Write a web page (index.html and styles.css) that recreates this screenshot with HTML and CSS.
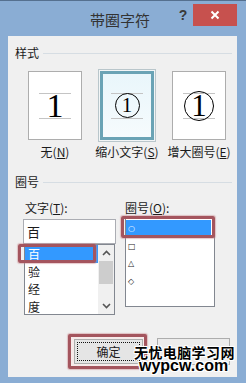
FILE: index.html
```html
<!DOCTYPE html>
<html lang="zh-CN">
<head>
    <meta charset="UTF-8">
    <title>带圈字符</title>
    <link rel="stylesheet" href="styles.css">
</head>
<body>
    <div class="window">
        <div class="titlebar">
            <span class="title">带圈字符</span>
            <span class="help">?</span>
            <span class="close">
                <svg width="10" height="10" viewBox="0 0 10 10"><path d="M1.5 1.5 L8.5 8.5 M8.5 1.5 L1.5 8.5" stroke="#fff" stroke-width="2"/></svg>
            </span>
        </div>
        <div class="panel">
            <div class="legend"><span>样式</span><i></i></div>
            <div class="styles">
                <div class="style-opt">
                    <div class="preview">
                        <div class="guide"><span class="digit">1</span></div>
                    </div>
                    <div class="opt-label">无(<u>N</u>)</div>
                </div>
                <div class="style-opt">
                    <div class="preview selected">
                        <div class="guide"><span class="ring small"><span class="digit">1</span></span></div>
                    </div>
                    <div class="opt-label">缩小文字(<u>S</u>)</div>
                </div>
                <div class="style-opt">
                    <div class="preview">
                        <div class="guide"><span class="ring large"><span class="digit">1</span></span></div>
                    </div>
                    <div class="opt-label">增大圈号(<u>E</u>)</div>
                </div>
            </div>

            <div class="legend second"><span>圈号</span><i></i></div>
            <div class="lists">
                <div class="col-left">
                    <div class="field-label">文字(<u>T</u>):</div>
                    <div class="text-input">百</div>
                    <div class="listbox chars">
                        <div class="items">
                            <div class="item selected">百</div>
                            <div class="item">验</div>
                            <div class="item">经</div>
                            <div class="item">度</div>
                        </div>
                        <div class="scrollbar">
                            <div class="arrow">
                                <svg width="9" height="6" viewBox="0 0 9 6"><path d="M1 5 L4.5 1.5 L8 5" fill="none" stroke="#555" stroke-width="1.6"/></svg>
                            </div>
                            <div class="thumb"></div>
                            <div class="track"></div>
                            <div class="arrow">
                                <svg width="9" height="6" viewBox="0 0 9 6"><path d="M1 1 L4.5 4.5 L8 1" fill="none" stroke="#555" stroke-width="1.6"/></svg>
                            </div>
                        </div>
                        <div class="mark"></div>
                    </div>
                </div>
                <div class="col-right">
                    <div class="field-label">圈号(<u>O</u>):</div>
                    <div class="listbox rings">
                        <div class="items">
                            <div class="item selected">○</div>
                            <div class="item">□</div>
                            <div class="item">△</div>
                            <div class="item">◇</div>
                        </div>
                        <div class="mark"></div>
                    </div>
                </div>
            </div>

            <div class="buttons">
                <div class="btn-mark">
                    <button class="btn ok"><span class="focus">确定</span></button>
                </div>
                <button class="btn cancel"></button>
            </div>

            <div class="watermark">
                <div class="wm-cn">无忧电脑学习网</div>
                <div class="wm-en">wypcw.com</div>
            </div>
        </div>
    </div>
</body>
</html>
```

FILE: styles.css
```css
body {
    margin: 0;
    padding: 0;
    font-family: "Noto Sans CJK SC", "Liberation Sans", sans-serif;
    color: #1b1b1b;
}
.window {
    width: 246px;
    height: 383px;
    box-sizing: border-box;
    background-color: #8aadd4;
    border-top: 1px solid #55708f;
}
.titlebar {
    height: 35px;
    display: flex;
    align-items: flex-start;
    padding-left: 90px;
}
.title {
    margin-top: 10px;
    font-size: 15px;
    line-height: 18px;
    color: #333;
}
.help {
    margin-left: auto;
    margin-top: 6px;
    width: 20px;
    text-align: center;
    font-family: "Liberation Sans", sans-serif;
    font-weight: bold;
    font-size: 14px;
    line-height: 16px;
    color: #3a3a3a;
}
.close {
    margin-top: 3px;
    margin-right: 9px;
    width: 44px;
    height: 22px;
    background-color: #c7514e;
    display: flex;
    align-items: center;
    justify-content: center;
}
.panel {
    position: relative;
    margin: 0 9px 6px 8px;
    height: 341px;
    box-sizing: border-box;
    padding: 10px 5px 0 7px;
    background-color: #f0f0f0;
}
.legend {
    display: flex;
    align-items: center;
    font-size: 12px;
    line-height: 14px;
}
.legend i {
    flex: 1;
    height: 1px;
    margin-left: 4px;
    background-color: #d6dde3;
}
.legend.second {
    margin-top: 16px;
}
.styles {
    display: grid;
    grid-template-columns: repeat(3, 72px);
    justify-items: center;
    margin: 11px 0 0 4px;
}
.style-opt {
    display: flex;
    flex-direction: column;
    align-items: center;
}
.preview {
    width: 54px;
    height: 69px;
    box-sizing: border-box;
    border: 1px solid #adadad;
    background-color: #fff;
    display: flex;
    align-items: center;
    justify-content: center;
}
.preview.selected {
    border: 3px solid #6aa3b5;
    background: linear-gradient(#e9f6fb, #f6fbfd);
    box-shadow: 0 0 0 1px #f2f5f6, 0 0 0 2px #b9c6cb;
}
.guide {
    width: 32px;
    height: 24px;
    border-top: 1px solid #c4c4c4;
    border-bottom: 1px solid #c4c4c4;
    display: flex;
    align-items: center;
    justify-content: center;
}
.digit {
    font-family: "Liberation Serif", serif;
    font-size: 34px;
    line-height: 1;
    color: #000;
}
.ring {
    flex: none;
    box-sizing: border-box;
    border: 1px solid #000;
    border-radius: 50%;
    display: flex;
    align-items: center;
    justify-content: center;
}
.ring.small {
    width: 25px;
    height: 25px;
}
.ring.small .digit {
    font-size: 21px;
}
.ring.large {
    width: 30px;
    height: 30px;
}
.ring.large .digit {
    font-size: 31px;
}
.opt-label {
    margin-top: 5px;
    font-size: 12px;
    line-height: 14px;
    white-space: nowrap;
}
.lists {
    display: flex;
    align-items: flex-start;
    margin-top: 12px;
}
.col-left {
    margin-left: 8px;
    width: 93px;
}
.col-right {
    margin-left: 9px;
}
.field-label {
    font-size: 12px;
    line-height: 14px;
}
.col-left .field-label {
    margin-left: 2px;
}
.text-input {
    margin-top: 4px;
    height: 25px;
    box-sizing: border-box;
    border: 1px solid #abadb3;
    background-color: #fff;
    padding-left: 3px;
    font-size: 13px;
    line-height: 23px;
}
.listbox {
    position: relative;
    box-sizing: border-box;
    border: 1px solid #828790;
    background-color: #fff;
    display: flex;
}
.listbox.chars {
    margin-left: 1px;
    width: 91px;
    height: 71px;
}
.listbox.rings {
    margin-top: 3px;
    width: 90px;
    height: 89px;
}
.items {
    flex: 1;
}
.item {
    height: 17.5px;
    line-height: 17.5px;
    font-size: 12px;
    padding-left: 3px;
}
.item.selected {
    background-color: #3399ff;
    color: #fff;
}
.rings .items {
    padding: 1px 3px 0 0;
}
.rings .item {
    font-family: "DejaVu Sans", sans-serif;
    font-size: 8px;
    padding-left: 2px;
}
.scrollbar {
    width: 16px;
    display: flex;
    flex-direction: column;
    background-color: #f0f0f0;
}
.arrow {
    height: 16px;
    display: flex;
    align-items: center;
    justify-content: center;
}
.thumb {
    height: 23px;
    margin: 0 1px;
    background-color: #cdcdcd;
}
.track {
    flex: 1;
}
.mark {
    position: absolute;
    box-sizing: border-box;
    border: 3px solid #a4555e;
    border-radius: 2px;
    box-shadow: 0 0 1px 1px rgba(200, 130, 135, 0.45);
}
.chars .mark {
    left: -7px;
    top: -1px;
    width: 78px;
    height: 19px;
}
.rings .mark {
    left: -5px;
    top: -3px;
    width: 94px;
    height: 22px;
}
.buttons {
    display: flex;
    justify-content: flex-end;
    align-items: center;
    margin-top: 19px;
    padding-right: 2px;
}
.btn-mark {
    border: 3px solid #a4555e;
    border-radius: 2px;
    padding: 2px 1px 2px 3px;
    background-color: #f6eaea;
    box-shadow: 0 0 1px 1px rgba(200, 130, 135, 0.45);
}
.btn {
    display: block;
    margin: 0;
    padding: 0;
    box-sizing: border-box;
    border: 1px solid #adadad;
    background-color: #e5e5e5;
    font-family: inherit;
    color: #1b1b1b;
}
.btn.ok {
    width: 69px;
    height: 25px;
}
.focus {
    display: block;
    margin: 2px;
    border: 1px dotted #111;
    font-size: 12px;
    line-height: 17px;
    text-align: center;
}
.btn.cancel {
    margin-left: 10px;
    width: 73px;
    height: 27px;
    background-color: #ececec;
}
.watermark {
    position: absolute;
    left: 126px;
    top: 308px;
    font-weight: bold;
    color: #000;
    text-shadow: 0 0 2px #fff, 1px 1px 0 #fff, -1px -1px 0 #fff, 1px -1px 0 #fff, -1px 1px 0 #fff;
}
.wm-cn {
    font-size: 14px;
    line-height: 17px;
    letter-spacing: 0.4px;
}
.wm-en {
    margin: -3px 0 0 5px;
    font-family: "Liberation Sans", sans-serif;
    font-size: 16px;
    line-height: 16px;
}
```
